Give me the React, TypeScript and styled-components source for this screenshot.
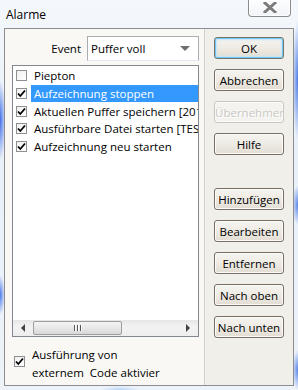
import React from "react"
import styled, { createGlobalStyle } from "styled-components"

const Global = createGlobalStyle`
    html, body { margin: 0; padding: 0; }
    body {
        font-family: "Open Sans", "Noto Sans", sans-serif;
        font-size: 11.5px;
        color: #000;
    }
`

const items = [
    { label: "Piepton", checked: false },
    { label: "Aufzeichnung stoppen", checked: true, selected: true },
    { label: "Aktuellen Puffer speichern [2010-08-12]", checked: true },
    { label: "Ausführbare Datei starten [TEST.exe]", checked: true },
    { label: "Aufzeichnung neu starten", checked: true },
]

const topButtons = ["OK", "Abbrechen", "Übernehmen", "Hilfe"]
const listButtons = ["Hinzufügen", "Bearbeiten", "Entfernen", "Nach oben", "Nach unten"]

function CheckMark() {
    return (
        <svg width="9" height="9" viewBox="0 0 9 9">
            <path d="M1 4.5 L3.3 7 L8 1.5" fill="none" stroke="#000" strokeWidth="1.8" />
        </svg>
    )
}

function CloseGlyph() {
    return (
        <svg width="14" height="11" viewBox="0 0 14 11">
            <path d="M2 1 L12 10 M12 1 L2 10" stroke="#fff" strokeWidth="5" strokeLinecap="square" />
            <path d="M2 1 L12 10 M12 1 L2 10" stroke="#7d7d7d" strokeWidth="3" strokeLinecap="square" />
        </svg>
    )
}

export default function App() {
    return (
        <>
            <Global />
            <Window>
                <TitleBar>
                    <Title>Alarme</Title>
                    <CloseButton><CloseGlyph /></CloseButton>
                </TitleBar>
                <Client>
                    <LeftPanel>
                        <EventRow>
                            <Label>Event</Label>
                            <Combo>
                                <span>Puffer voll</span>
                                <Arrow />
                            </Combo>
                        </EventRow>
                        <ListBox>
                            <Items>
                                {items.map((it) => (
                                    <Item key={it.label}>
                                        <Box>{it.checked && <CheckMark />}</Box>
                                        <ItemText $selected={!!it.selected}>{it.label}</ItemText>
                                    </Item>
                                ))}
                            </Items>
                            <HScroll>
                                <ScrollArrow $dir="left" />
                                <Thumb>
                                    <Grip>
                                        <i /><i /><i />
                                    </Grip>
                                </Thumb>
                                <ScrollTrack />
                                <ScrollArrow $dir="right" />
                            </HScroll>
                        </ListBox>
                        <ExternalRow>
                            <Box><CheckMark /></Box>
                            <ExternalText>Ausführung von<br />externem&nbsp; Code aktivier</ExternalText>
                        </ExternalRow>
                    </LeftPanel>
                    <RightPanel>
                        <ButtonGroup>
                            {topButtons.map((b) => (
                                <Button key={b} $default={b === "OK"} disabled={b === "Übernehmen"}>{b}</Button>
                            ))}
                        </ButtonGroup>
                        <ButtonGroup>
                            {listButtons.map((b) => (
                                <Button key={b}>{b}</Button>
                            ))}
                        </ButtonGroup>
                    </RightPanel>
                </Client>
            </Window>
        </>
    )
}

const Window = styled.div`
    width: 298px;
    height: 390px;
    box-sizing: border-box;
    padding: 0 4px 0 4px;
    overflow: hidden;
    background:
        radial-gradient(ellipse 6px 40px at 0px 120px, #3f6ee8 0%, rgba(63,110,232,0) 100%),
        radial-gradient(ellipse 5px 20px at 0px 295px, #4a78ea 0%, rgba(74,120,234,0) 100%),
        radial-gradient(ellipse 6px 60px at 298px 80px, #4b78e4 0%, rgba(75,120,228,0) 100%),
        radial-gradient(ellipse 6px 20px at 298px 205px, #5a84e8 0%, rgba(90,132,232,0) 100%),
        radial-gradient(ellipse 6px 20px at 298px 370px, #5a84e8 0%, rgba(90,132,232,0) 100%),
        radial-gradient(ellipse 20px 4px at 120px 390px, #b8d4f4 0%, rgba(184,212,244,0) 100%),
        radial-gradient(ellipse 40px 8px at 60px 50px, #d6e4f6 0%, rgba(214,228,246,0) 100%),
        radial-gradient(ellipse 60px 8px at 180px 44px, #d0e0f4 0%, rgba(208,224,244,0) 100%),
        linear-gradient(180deg, #f4f8fc 0%, #e9f0f8 40%, #eef3f9 100%);
`

const TitleBar = styled.div`
    height: 28px;
    display: flex;
    align-items: flex-start;
    justify-content: space-between;
    padding-left: 2px;
    padding-right: 3px;
`

const Title = styled.div`
    font-family: "Open Sans", sans-serif;
    font-size: 12px;
    margin-top: 6px;
    color: #000;
`

const CloseButton = styled.div`
    width: 43px;
    height: 18px;
    margin-top: -1px;
    box-sizing: border-box;
    border: 1px solid #8c8c8c;
    border-top: none;
    border-radius: 0 0 4px 4px;
    background: linear-gradient(180deg, rgba(255,255,255,0.9), rgba(240,243,247,0.8));
    box-shadow: inset 0 0 0 1px rgba(255,255,255,0.8);
    display: flex;
    align-items: center;
    justify-content: center;
`

const Client = styled.div`
    height: 358px;
    box-sizing: border-box;
    border: 1px solid #8b8d91;
    background: #f1efea;
    display: flex;
    width: 290px;
`

const LeftPanel = styled.div`
    width: 200px;
    box-sizing: border-box;
    border-right: 1px solid #d5d1c8;
    background: #f9f8f5;
    padding: 7px 5px 0 7px;
    display: flex;
    flex-direction: column;
`

const EventRow = styled.div`
    display: flex;
    justify-content: flex-end;
    align-items: center;
    gap: 6px;
    height: 25px;
`

const Label = styled.span`
    color: #000;
`

const Combo = styled.div`
    width: 112px;
    height: 25px;
    box-sizing: border-box;
    border: 1px solid #abadb3;
    border-bottom-color: #e3e9ef;
    background: #fff;
    display: flex;
    align-items: center;
    justify-content: space-between;
    padding: 0 8px 0 3px;
`

const Arrow = styled.span`
    width: 0;
    height: 0;
    border-left: 5px solid transparent;
    border-right: 5px solid transparent;
    border-top: 5px solid #707070;
`

const ListBox = styled.div`
    margin-top: 4px;
    height: 272px;
    box-sizing: border-box;
    border: 1px solid #828790;
    background: #fff;
    display: flex;
    flex-direction: column;
    overflow: hidden;
`

const Items = styled.div`
    flex: 1;
    padding-top: 1px;
    overflow: hidden;
`

const Item = styled.div`
    display: flex;
    align-items: center;
    height: 17.7px;
    padding-left: 3px;
    white-space: nowrap;
`

const Box = styled.span`
    width: 11px;
    height: 11px;
    flex: none;
    box-sizing: border-box;
    border: 1px solid #8e8f8f;
    background: linear-gradient(135deg, #f0f0f0, #fff);
    display: flex;
    align-items: center;
    justify-content: center;
`

const ItemText = styled.span<{ $selected: boolean }>`
    flex: 1;
    margin-left: 4px;
    padding-left: 3px;
    height: 17px;
    line-height: 17px;
    overflow: hidden;
    background: ${(p) => (p.$selected ? "#3399ff" : "transparent")};
    color: ${(p) => (p.$selected ? "#fff" : "#000")};
`

const HScroll = styled.div`
    height: 16px;
    flex: none;
    display: flex;
    align-items: center;
    background: linear-gradient(180deg, #e6e6e6, #f2f2f2 40%, #eeeeee);
    padding: 0 2px;
`

const ScrollArrow = styled.span<{ $dir: "left" | "right" }>`
    width: 16px;
    height: 16px;
    flex: none;
    display: flex;
    align-items: center;
    justify-content: center;
    &::before {
        content: "";
        border-top: 4px solid transparent;
        border-bottom: 4px solid transparent;
        ${(p) => (p.$dir === "left" ? "border-right: 4px solid #404040;" : "border-left: 4px solid #404040;")}
    }
`

const Thumb = styled.span`
    width: 89px;
    height: 14px;
    margin-left: 2px;
    box-sizing: border-box;
    border: 1px solid #9e9e9e;
    border-radius: 2px;
    background: linear-gradient(180deg, #f4f4f4, #e8e8e8 50%, #d8d8d8);
    display: flex;
    align-items: center;
    justify-content: center;
`

const Grip = styled.span`
    display: flex;
    gap: 1px;
    i {
        width: 1px;
        height: 6px;
        background: #555;
        border-right: 1px solid #fff;
    }
`

const ScrollTrack = styled.span`
    flex: 1;
`

const ExternalRow = styled.div`
    display: flex;
    align-items: flex-start;
    margin-top: 13px;
    padding-left: 2px;
    ${Box} {
        margin-top: 6px;
    }
`

const ExternalText = styled.span`
    margin-left: 7px;
    line-height: 18px;
    margin-top: -4px;
`

const RightPanel = styled.div`
    flex: 1;
    display: flex;
    flex-direction: column;
    gap: 33px;
    padding: 8px 0 0 9px;
`

const ButtonGroup = styled.div`
    display: flex;
    flex-direction: column;
    gap: 10px;
`

const Button = styled.button<{ $default?: boolean }>`
    width: 70px;
    height: 22px;
    padding: 0;
    overflow: hidden;
    white-space: nowrap;
    font-family: "Open Sans", sans-serif;
    font-size: 11.5px;
    color: #000;
    border: 1px solid ${(p) => (p.$default ? "#7a7368" : "#786e62")};
    border-radius: 3px;
    background: linear-gradient(180deg, #f6f4f0 0%, #eeebe4 50%, #e2ddd3 100%);
    box-shadow: ${(p) =>
        p.$default ? "inset 0 0 0 1px #6ec8f7, inset 0 0 2px 2px #c4e6f8" : "inset 0 0 0 1px #fcfbf9"};
    &:disabled {
        border-color: #c9c6c1;
        color: #cac8c3;
        text-shadow: 1px 1px 0 #fff;
        background: #f4f3ef;
        box-shadow: inset 0 0 0 1px #fbfaf8;
    }
`
